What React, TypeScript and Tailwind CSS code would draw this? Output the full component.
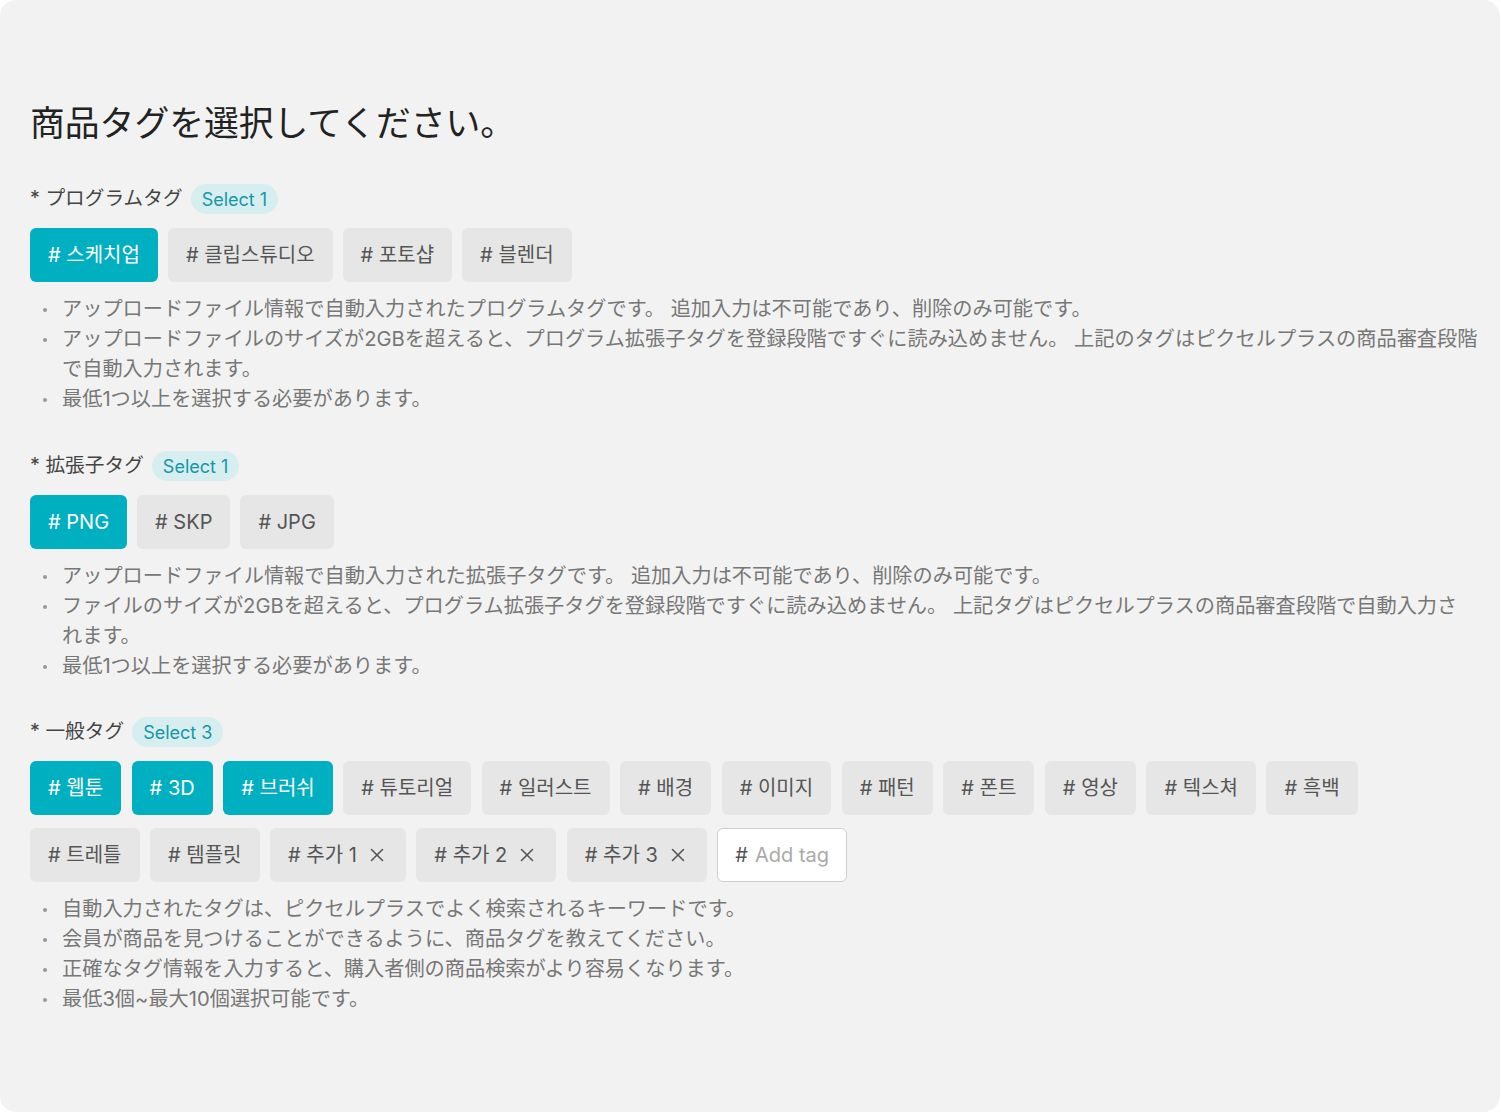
import React from 'react';
import { X } from 'lucide-react';

const font = { fontFamily: 'Inter, "Noto Sans CJK JP", "Noto Sans CJK KR", sans-serif' };

type Tag = { label: string; active?: boolean; removable?: boolean };

const TagChip = ({ tag }: { tag: Tag }) => (
  <div
    className={`h-[54px] px-[18px] rounded-md flex items-center gap-[9px] text-[20px] whitespace-nowrap ${
      tag.active ? 'bg-[#00afc0] text-white' : 'bg-[#e6e6e6] text-[#555]'
    }`}
  >
    <span># {tag.label}</span>
    {tag.removable && <X size={22} strokeWidth={1.7} className="text-[#555]" />}
  </div>
);

const Notes = ({ items }: { items: string[] }) => (
  <ul className="mt-3 mr-[-12px] text-[20.2px] leading-[30px] text-[#777]">
    {items.map((t, i) => (
      <li key={i} className="flex">
        <span className="w-[32px] shrink-0 flex justify-start pl-[13px] pt-[14px]">
          <span className="block w-[4px] h-[4px] rounded-full bg-[#999]" />
        </span>
        <span className="whitespace-pre-line">{t}</span>
      </li>
    ))}
  </ul>
);

const SectionHead = ({ title, count }: { title: string; count: number }) => (
  <div className="flex items-center gap-2 h-[30px]">
    <span className="text-[19.7px] text-[#444]">* {title}</span>
    <span className="h-[30px] px-[11px] rounded-full bg-[#d6eef0] text-[#1597a7] text-[18px] flex items-center">
      Select {count}
    </span>
  </div>
);

const App: React.FC = () => {
  const program: Tag[] = [
    { label: '스케치업', active: true },
    { label: '클립스튜디오' },
    { label: '포토샵' },
    { label: '블렌더' },
  ];
  const ext: Tag[] = [{ label: 'PNG', active: true }, { label: 'SKP' }, { label: 'JPG' }];
  const general: Tag[] = [
    { label: '웹툰', active: true },
    { label: '3D', active: true },
    { label: '브러쉬', active: true },
    { label: '튜토리얼' },
    { label: '일러스트' },
    { label: '배경' },
    { label: '이미지' },
    { label: '패턴' },
    { label: '폰트' },
    { label: '영상' },
    { label: '텍스쳐' },
    { label: '흑백' },
    { label: '트레틀' },
    { label: '템플릿' },
    { label: '추가 1', removable: true },
    { label: '추가 2', removable: true },
    { label: '추가 3', removable: true },
  ];

  return (
    <div className="bg-white min-h-[1114px]" style={font}>
      <div className="w-[1500px] h-[1112px] bg-[#f2f2f2] rounded-2xl px-[30px] pt-[100px]">
        <h1 className="text-[34.8px] leading-[46px] text-[#222]">商品タグを選択してください。</h1>

        {/* プログラムタグ */}
        <div className="mt-[38px]">
          <SectionHead title="プログラムタグ" count={1} />
          <div className="mt-[14px] flex flex-wrap gap-[10px]">
            {program.map(t => <TagChip key={t.label} tag={t} />)}
          </div>
          <Notes
            items={[
              'アップロードファイル情報で自動入力されたプログラムタグです。 追加入力は不可能であり、削除のみ可能です。',
              'アップロードファイルのサイズが2GBを超えると、プログラム拡張子タグを登録段階ですぐに読み込めません。 上記のタグはピクセルプラスの商品審査段階で自動入力されます。',
              '最低1つ以上を選択する必要があります。',
            ]}
          />
        </div>

        {/* 拡張子タグ */}
        <div className="mt-[37px]">
          <SectionHead title="拡張子タグ" count={1} />
          <div className="mt-[14px] flex flex-wrap gap-[10px]">
            {ext.map(t => <TagChip key={t.label} tag={t} />)}
          </div>
          <Notes
            items={[
              'アップロードファイル情報で自動入力された拡張子タグです。 追加入力は不可能であり、削除のみ可能です。',
              'ファイルのサイズが2GBを超えると、プログラム拡張子タグを登録段階ですぐに読み込めません。 上記タグはピクセルプラスの商品審査段階で自動入力さ\nれます。',
              '最低1つ以上を選択する必要があります。',
            ]}
          />
        </div>

        {/* 一般タグ */}
        <div className="mt-[36px]">
          <SectionHead title="一般タグ" count={3} />
          <div className="mt-[14px] flex flex-wrap gap-x-[10.5px] gap-y-[13px] max-w-[1345px]">
            {general.map(t => <TagChip key={t.label} tag={t} />)}
            <div className="h-[54px] px-[17px] rounded-md border border-[#cfcfcf] bg-white flex items-center text-[20px] whitespace-nowrap">
              <span className="text-[#555]">#</span>
              <span className="ml-[7px] text-[#aaa]">Add tag</span>
            </div>
          </div>
          <Notes
            items={[
              '自動入力されたタグは、ピクセルプラスでよく検索されるキーワードです。',
              '会員が商品を見つけることができるように、商品タグを教えてください。',
              '正確なタグ情報を入力すると、購入者側の商品検索がより容易くなります。',
              '最低3個~最大10個選択可能です。',
            ]}
          />
        </div>
      </div>
    </div>
  );
};

export default App;
